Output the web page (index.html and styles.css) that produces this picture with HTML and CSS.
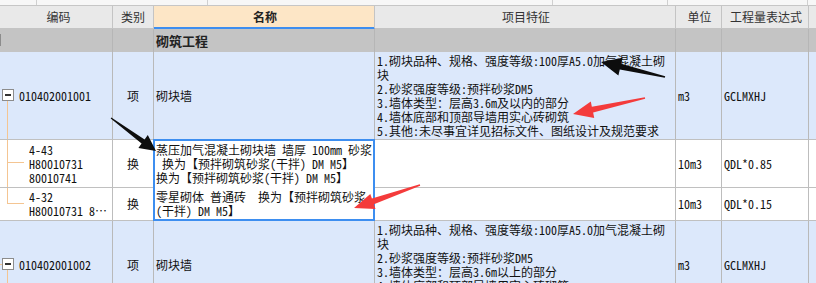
FILE: index.html
```html
<!DOCTYPE html>
<html lang="zh">
<head>
<meta charset="utf-8">
<title>清单</title>
<link rel="stylesheet" href="styles.css">
</head>
<body>
<div class="sheet">
  <div class="strip">
    <span class="s1"></span><span class="s2"></span><span class="s3"></span><span class="s4"></span><span class="s5"></span><span class="s6"></span>
  </div>

  <div class="row head">
    <div class="cell c-code">编码</div>
    <div class="cell c-type">类别</div>
    <div class="cell c-name active">名称</div>
    <div class="cell c-feat">项目特征</div>
    <div class="cell c-unit">单位</div>
    <div class="cell c-expr">工程量表达式</div>
    <div class="cell c-rest"></div>
  </div>

  <div class="row group">
    <div class="cell c-code"><span class="tbox plus"></span></div>
    <div class="cell c-type"></div>
    <div class="cell c-name"><b>砌筑工程</b></div>
    <div class="cell c-feat"></div>
    <div class="cell c-unit"></div>
    <div class="cell c-expr"></div>
    <div class="cell c-rest"></div>
  </div>

  <div class="row item r1">
    <div class="cell c-code"><span class="tbox minus"></span><span class="vline vl-below"></span>010402001001</div>
    <div class="cell c-type">项</div>
    <div class="cell c-name">砌块墙</div>
    <div class="cell c-feat">
      <div class="lines">1.砌块品种、规格、强度等级:100厚A5.0加气混凝土砌<br>块<br>2.砂浆强度等级:预拌砂浆DM5<br>3.墙体类型：层高3.6m及以内的部分<br>4.墙体底部和顶部导墙用实心砖砌筑<br>5.其他:未尽事宜详见招标文件、图纸设计及规范要求</div>
    </div>
    <div class="cell c-unit">m3</div>
    <div class="cell c-expr">GCLMXHJ</div>
    <div class="cell c-rest"></div>
  </div>

  <div class="row sub r2">
    <div class="cell c-code child"><span class="vline vl-full"></span><span class="hline hl-r2"></span><div class="lines">4-43<br>H80010731<br>80010741</div></div>
    <div class="cell c-type">换</div>
    <div class="cell c-name inbox"><div class="lines">蒸压加气混凝土砌块墙 墙厚 100mm 砂浆<br>&nbsp;换为【预拌砌筑砂浆(干拌) DM M5】<br>换为【预拌砌筑砂浆(干拌) DM M5】</div></div>
    <div class="cell c-feat"></div>
    <div class="cell c-unit">10m3</div>
    <div class="cell c-expr">QDL*0.85</div>
    <div class="cell c-rest"></div>
  </div>

  <div class="row sub r3">
    <div class="cell c-code child"><span class="vline vl-top"></span><span class="hline hl-r3"></span><div class="lines">4-32<br>H80010731 8…</div></div>
    <div class="cell c-type">换</div>
    <div class="cell c-name"><div class="lines">零星砌体 普通砖&nbsp;&nbsp;换为【预拌砌筑砂浆<br>(干拌) DM M5】</div></div>
    <div class="cell c-feat"></div>
    <div class="cell c-unit">10m3</div>
    <div class="cell c-expr">QDL*0.15</div>
    <div class="cell c-rest"></div>
  </div>

  <div class="row item r4">
    <div class="cell c-code"><span class="hline hl-lead"></span><span class="tbox minus"></span><span class="vline vl-below"></span>010402001002</div>
    <div class="cell c-type">项</div>
    <div class="cell c-name">砌块墙</div>
    <div class="cell c-feat">
      <div class="lines">1.砌块品种、规格、强度等级:100厚A5.0加气混凝土砌<br>块<br>2.砂浆强度等级:预拌砂浆DM5<br>3.墙体类型：层高3.6m以上的部分<br>4.墙体底部和顶部导墙用实心砖砌筑<br>5.其他:未尽事宜详见招标文件、图纸设计及规范要求</div>
    </div>
    <div class="cell c-unit">m3</div>
    <div class="cell c-expr">GCLMXHJ</div>
    <div class="cell c-rest"></div>
  </div>

  <div class="selection"></div>

  <svg class="arrows" width="816" height="283" viewBox="0 0 816 283" aria-hidden="true">
    <polygon class="a-black" points="110.7,118.4 141.6,143.5 138.4,148 156,151 147.8,135.1 144.6,139.5 111.3,117.6"/>
    <polygon class="a-black" points="665.2,76.3 621.2,63.7 622.5,57.8 601,62 618.4,75.4 619.8,69.5 664.8,77.7"/>
    <polygon class="a-red" points="644.85,97.3 591.85,106.8 590.8,101.5 573,114 594.2,118 593.15,112.6 645.15,98.7"/>
    <polygon class="a-red" points="419.8,184.3 371.9,198.6 370.3,193.9 354,208 375.5,209 373.9,204.2 420.2,185.7"/>
  </svg>
</div>
</body>
</html>
```

FILE: styles.css
```css
* { box-sizing: border-box; }

html, body {
  margin: 0;
  padding: 0;
  background: #ffffff;
}

body {
  font-family: "Noto Sans CJK SC", "Noto Sans", sans-serif;
  font-size: 12px;
  color: #111;
  overflow: hidden;
}

.sheet {
  position: relative;
  width: 816px;
  height: 283px;
  overflow: hidden;
}

/* thin strip of the row above */
.strip {
  display: flex;
  height: 6px;
  background: #f7f7f7;
  border-bottom: 1px solid #c6c6c6;
}
.strip span { height: 100%; border-right: 1px solid #d0d0d0; }
.strip .s1 { width: 37px; }
.strip .s2 { width: 171px; }
.strip .s3 { width: 345px; }
.strip .s4 { width: 115px; }
.strip .s5 { width: 140px; }
.strip .s6 { flex: 1; border-right: 0; }

.row {
  display: grid;
  grid-template-columns: 113px 41px 221px 301px 46px 87px 1fr;
}

.cell {
  display: flex;
  align-items: center;
  border-right: 1px solid #bdbdbd;
  border-bottom: 1px solid #c0c0c0;
  white-space: nowrap;
  overflow: hidden;
  line-height: 14px;
}
.cell.c-rest { border-right: 0; }

/* body cells use half-width latin like the original grid font */
.item .cell, .sub .cell {
  font-family: "Noto Sans Mono CJK SC", "Noto Sans CJK SC", sans-serif;
  font-feature-settings: "hwid" 1;
}

.lines { line-height: 14px; }

/* header */
.head { height: 23px; background: #e9e9e9; color: #333; }
.head .cell { justify-content: center; border-color: #c4c4c4; }
.head .c-code { padding-right: 14px; }
.head .active {
  background: #fde6c6;
  font-weight: bold;
  color: #222;
  border-bottom-color: #3d8ef0;
  box-shadow: inset 0 -1px 0 #3d8ef0;
}

/* group row */
.group { height: 23px; background: #c4c4c4; }
.group .cell { border-bottom: 0; border-right-color: #b6b6b6; }
.group .c-name { padding-left: 2px; font-size: 13px; color: #222; }

/* item rows */
.item { background: #dce8fb; }
.r1 { height: 88px; }
.r4 { height: 88px; }
.item .cell { border-right-color: #b9b9b9; }

.sub { background: #ffffff; }
.r2 { height: 48px; }
.r3 { height: 33px; }
.r2 .inbox { border-bottom-color: #ffffff; }

.c-code { position: relative; padding-left: 19px; }
.c-code.child { padding-left: 29px; }
.c-type { justify-content: center; }
.c-name { padding-left: 2px; }
.c-feat { padding-left: 2px; }
.c-unit { padding-left: 2px; }
.c-expr { padding-left: 2px; }

/* tree decorations */
.tbox {
  position: absolute;
  width: 12px;
  height: 12px;
  border: 1px solid #8c8c8c;
  background: #ffffff;
}
.tbox::before {
  content: "";
  position: absolute;
  left: 2px;
  top: 4px;
  width: 6px;
  height: 2px;
  background: #333;
}
.item .tbox { left: 2px; top: 37px; }
.group .tbox { left: -11px; top: 5px; }
.tbox.plus::after {
  content: "";
  position: absolute;
  left: 4px;
  top: 2px;
  width: 2px;
  height: 6px;
  background: #333;
}

.vline {
  position: absolute;
  left: 7px;
  width: 1px;
  background: #f4c592;
}
.vl-below { top: 49px; bottom: 0; }
.vl-full { top: 0; bottom: -1px; }
.vl-top { top: 0; height: 16px; }

.hline {
  position: absolute;
  height: 1px;
  background: #f4c592;
}
.hl-r2 { left: 7px; width: 17px; top: 22px; }
.hl-r3 { left: 7px; width: 17px; top: 15px; }
.hl-lead { left: 0; width: 2px; top: 43px; }

/* selected editor box */
.selection {
  position: absolute;
  left: 153px;
  top: 139px;
  width: 222px;
  height: 82px;
  border: 2px solid #3d8ef0;
  pointer-events: none;
}

/* annotation arrows */
.arrows {
  position: absolute;
  left: 0;
  top: 0;
  pointer-events: none;
}
.a-black { fill: #0d0d0d; }
.a-red { fill: #f43b3b; }
```
